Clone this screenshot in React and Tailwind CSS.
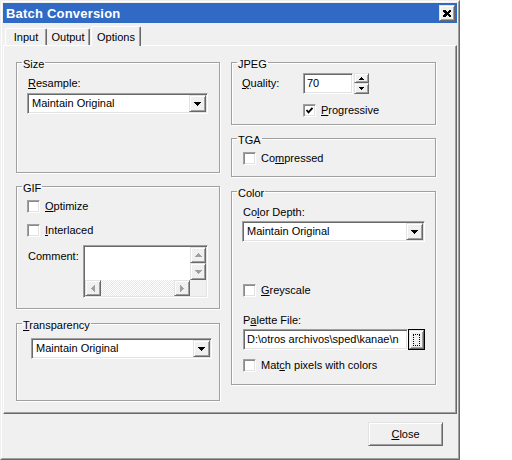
import React from "react";

function Sunken({ className = "", children }) {
  return (
    <div
      className={
        "border border-t-[#a0a0a0] border-l-[#a0a0a0] border-r-white border-b-white shadow-[inset_1px_1px_0_#696969,inset_-1px_-1px_0_#e3e3e3] bg-white " +
        className
      }
    >
      {children}
    </div>
  );
}

function Raised({ className = "", children }) {
  return (
    <div
      className={
        "border border-t-[#e3e3e3] border-l-[#e3e3e3] border-r-[#696969] border-b-[#696969] shadow-[inset_1px_1px_0_#fff,inset_-1px_-1px_0_#a0a0a0] bg-[#f0f0f0] " +
        className
      }
    >
      {children}
    </div>
  );
}

function Tri({ dir = "down", color = "#000" }) {
  const pts = {
    down: "0,0 7,0 3.5,4",
    up: "0,4 7,4 3.5,0",
    left: "4,0 4,7 0,3.5",
    right: "0,0 0,7 4,3.5",
  }[dir];
  const vert = dir === "down" || dir === "up";
  return (
    <svg width={vert ? 7 : 4} height={vert ? 4 : 7} viewBox={vert ? "0 0 7 4" : "0 0 4 7"} shapeRendering="crispEdges">
      <polygon points={pts} fill={color} />
    </svg>
  );
}

function Combo({ className = "", text }) {
  return (
    <Sunken className={"h-[21px] p-[1px] flex " + className}>
      <div className="flex-1 flex items-center pl-[3px] text-[11px] leading-[13px] text-black">{text}</div>
      <Raised className="w-[17px] h-[17px] flex items-center justify-center">
        <Tri dir="down" />
      </Raised>
    </Sunken>
  );
}

function Check({ checked }) {
  return (
    <div className="w-[13px] h-[13px] shrink-0 border border-t-[#a0a0a0] border-l-[#a0a0a0] border-r-white border-b-white shadow-[inset_1px_1px_0_#8a8a8a,inset_-1px_-1px_0_#e3e3e3] bg-white flex items-center justify-center">
      {checked && (
        <svg width="9" height="9" viewBox="0 0 9 9">
          <polyline points="1.5,4 3.5,6.3 7.5,1.8" fill="none" stroke="#000" strokeWidth="1.8" />
        </svg>
      )}
    </div>
  );
}

function CheckRow({ checked, children, className = "" }) {
  return (
    <div className={"flex items-center h-[13px] " + className}>
      <Check checked={checked} />
      <span className="ml-[5px] text-[11px] leading-[13px]">{children}</span>
    </div>
  );
}

function Group({ title, className = "", children }) {
  return (
    <fieldset
      className={
        "border border-[#a0a0a0] shadow-[1px_1px_0_#fff,inset_1px_1px_0_#fff] m-0 p-0 min-w-0 " + className
      }
    >
      <legend className="ml-[5px] px-[1px] h-[13px] text-[11px] leading-[13px]">
        <span className="relative top-[2px]">{title}</span>
      </legend>
      {children}
    </fieldset>
  );
}

function U({ children }) {
  return <span className="underline underline-offset-[1px]">{children}</span>;
}

export default function App() {
  return (
    <div className="w-[512px] h-[460px] bg-white font-['Liberation_Sans',Arial,sans-serif] text-black">
      <div className="w-[460px] h-[460px] border border-t-[#f0f0f0] border-l-[#f0f0f0] border-r-[#696969] border-b-[#696969]">
        <div className="w-full h-full border border-t-white border-l-white border-r-[#a0a0a0] border-b-[#a0a0a0] bg-[#f0f0f0] p-[1px] flex flex-col">
          {/* Title bar */}
          <div className="h-[20px] bg-[#316ac5] flex items-center justify-between shrink-0">
            <span className="pl-[3px] text-white font-bold text-[13px] leading-[15px] tracking-[0.2px]">Batch Conversion</span>
            <Raised className="w-[16px] h-[16px] mr-[2px] flex items-center justify-center">
              <svg width="8" height="7" viewBox="0 0 8 7" shapeRendering="crispEdges">
                <path d="M0 0h2l2 2 2-2h2v1L6 3.5 8 6v1H6L4 5 2 7H0V6l2-2.5L0 1z" fill="#000" />
              </svg>
            </Raised>
          </div>

          {/* Tabs */}
          <div className="h-[22px] flex items-end shrink-0 relative z-10">
            <div className="ml-[2px] w-[42px] h-[17px] border-t border-l border-r border-t-white border-l-white border-r-[#696969] rounded-tl-[2px] rounded-tr-[2px] shadow-[inset_-1px_0_0_#a0a0a0] flex items-center justify-center text-[11px]">
              Input
            </div>
            <div className="w-[43px] h-[17px] border-t border-r border-t-white border-r-[#696969] rounded-tr-[2px] shadow-[inset_-1px_0_0_#a0a0a0] flex items-center justify-center text-[11px]">
              Output
            </div>
            <div className="ml-[1px] w-[50px] h-[20px] -mb-[1px] bg-[#f0f0f0] border-t border-l border-r border-t-white border-l-white border-r-[#696969] rounded-tl-[2px] rounded-tr-[2px] shadow-[inset_-1px_0_0_#a0a0a0] flex items-start pt-[2px] justify-center text-[11px]">
              Options
            </div>
          </div>

          {/* Tab panel */}
          <div className="h-[369px] shrink-0 border border-t-white border-l-white border-r-[#696969] border-b-[#696969] shadow-[inset_-1px_-1px_0_#a0a0a0] pl-[12px] pt-[10px] flex gap-[11px]">
            {/* Left column */}
            <div className="w-[204px] flex flex-col">
              <Group title="Size" className="h-[117px]">
                <div className="pl-[10px] pt-[8px]">
                  <div className="text-[11px] leading-[13px] pl-[1px]">
                    <U>R</U>esample:
                  </div>
                  <Combo className="w-[181px] mt-[3px]" text="Maintain Original" />
                </div>
              </Group>

              <Group title="GIF" className="h-[129px] mt-[7px]">
                <div className="pl-[10px] pt-[7px]">
                  <CheckRow>
                    <U>O</U>ptimize
                  </CheckRow>
                  <CheckRow className="mt-[11px]">
                    <U>I</U>nterlaced
                  </CheckRow>
                  <div className="flex mt-[8px]">
                    <div className="w-[56px] pt-[5px] pl-[1px] text-[11px] leading-[13px]">Comment:</div>
                    <Sunken className="w-[125px] h-[53px] p-[1px] flex flex-col">
                      <div className="flex flex-1">
                        <div className="flex-1" />
                        <div className="w-[16px] flex flex-col">
                          <Raised className="h-[16px] flex items-center justify-center">
                            <Tri dir="up" color="#a0a0a0" />
                          </Raised>
                          <Raised className="flex-1 flex items-center justify-center">
                            <Tri dir="down" color="#a0a0a0" />
                          </Raised>
                        </div>
                      </div>
                      <div className="h-[16px] flex">
                        <Raised className="w-[16px] flex items-center justify-center">
                          <Tri dir="left" color="#a0a0a0" />
                        </Raised>
                        <div className="flex-1 bg-[repeating-conic-gradient(#ffffff_0_25%,#e6e6e6_0_50%)] bg-[length:2px_2px]" />
                        <Raised className="w-[16px] flex items-center justify-center">
                          <Tri dir="right" color="#a0a0a0" />
                        </Raised>
                        <div className="w-[16px] bg-[#f0f0f0]" />
                      </div>
                    </Sunken>
                  </div>
                </div>
              </Group>

              <Group
                title={
                  <>
                    <U>T</U>ransparency
                  </>
                }
                className="h-[84px] mt-[8px]"
              >
                <div className="pl-[14px] pt-[8px]">
                  <Combo className="w-[181px]" text="Maintain Original" />
                </div>
              </Group>
            </div>

            {/* Right column */}
            <div className="w-[205px] flex flex-col">
              <Group title="JPEG" className="h-[69px]">
                <div className="pl-[10px] pt-[4px]">
                  <div className="flex items-center h-[21px]">
                    <div className="w-[61px] text-[11px] leading-[13px]">
                      <U>Q</U>uality:
                    </div>
                    <Sunken className="w-[50px] h-[21px] flex items-center pl-[3px] text-[11px]">70</Sunken>
                    <div className="ml-[1px] w-[15px] h-[21px] flex flex-col">
                      <Raised className="h-[10px] flex items-center justify-center">
                        <svg width="5" height="3" viewBox="0 0 5 3" shapeRendering="crispEdges">
                          <polygon points="0,3 5,3 2.5,0" fill="#000" />
                        </svg>
                      </Raised>
                      <Raised className="flex-1 flex items-center justify-center">
                        <svg width="5" height="3" viewBox="0 0 5 3" shapeRendering="crispEdges">
                          <polygon points="0,0 5,0 2.5,3" fill="#000" />
                        </svg>
                      </Raised>
                    </div>
                  </div>
                  <CheckRow checked className="ml-[61px] mt-[10px]">
                    <U>P</U>rogressive
                  </CheckRow>
                </div>
              </Group>

              <Group title="TGA" className="h-[45px] mt-[7px]">
                <div className="pl-[11px] pt-[7px]">
                  <CheckRow>
                    Co<U>m</U>pressed
                  </CheckRow>
                </div>
              </Group>

              <Group title="Color" className="h-[200px] mt-[8px]">
                <div className="pl-[10px] pt-[8px]">
                  <div className="text-[11px] leading-[13px] pl-[1px]">
                    Co<U>l</U>or Depth:
                  </div>
                  <Combo className="w-[183px] mt-[2px]" text="Maintain Original" />
                  <CheckRow className="ml-[1px] mt-[42px]">
                    <U>G</U>reyscale
                  </CheckRow>
                  <div className="mt-[17px] pl-[1px] text-[11px] leading-[13px]">
                    P<U>a</U>lette File:
                  </div>
                  <div className="flex mt-[2px] ml-[1px]">
                    <Sunken className="w-[165px] h-[21px] flex items-center pl-[3px] text-[11px] overflow-hidden whitespace-nowrap">
                      D:\otros archivos\sped\kanae\n
                    </Sunken>
                    <div className="w-[17px] h-[21px] border border-black flex">
                      <Raised className="flex-1 flex items-center justify-center">
                        <div className="w-[7px] h-[12px] border border-dotted border-black" />
                      </Raised>
                    </div>
                  </div>
                  <CheckRow className="ml-[1px] mt-[9px]">
                    Mat<U>c</U>h pixels with colors
                  </CheckRow>
                </div>
              </Group>
            </div>
          </div>

          {/* Bottom */}
          <div className="flex justify-end pt-[8px] pr-[14px]">
            <Raised className="w-[75px] h-[24px] flex items-center justify-center text-[11px]">
              <span>
                <U>C</U>lose
              </span>
            </Raised>
          </div>
        </div>
      </div>
    </div>
  );
}
